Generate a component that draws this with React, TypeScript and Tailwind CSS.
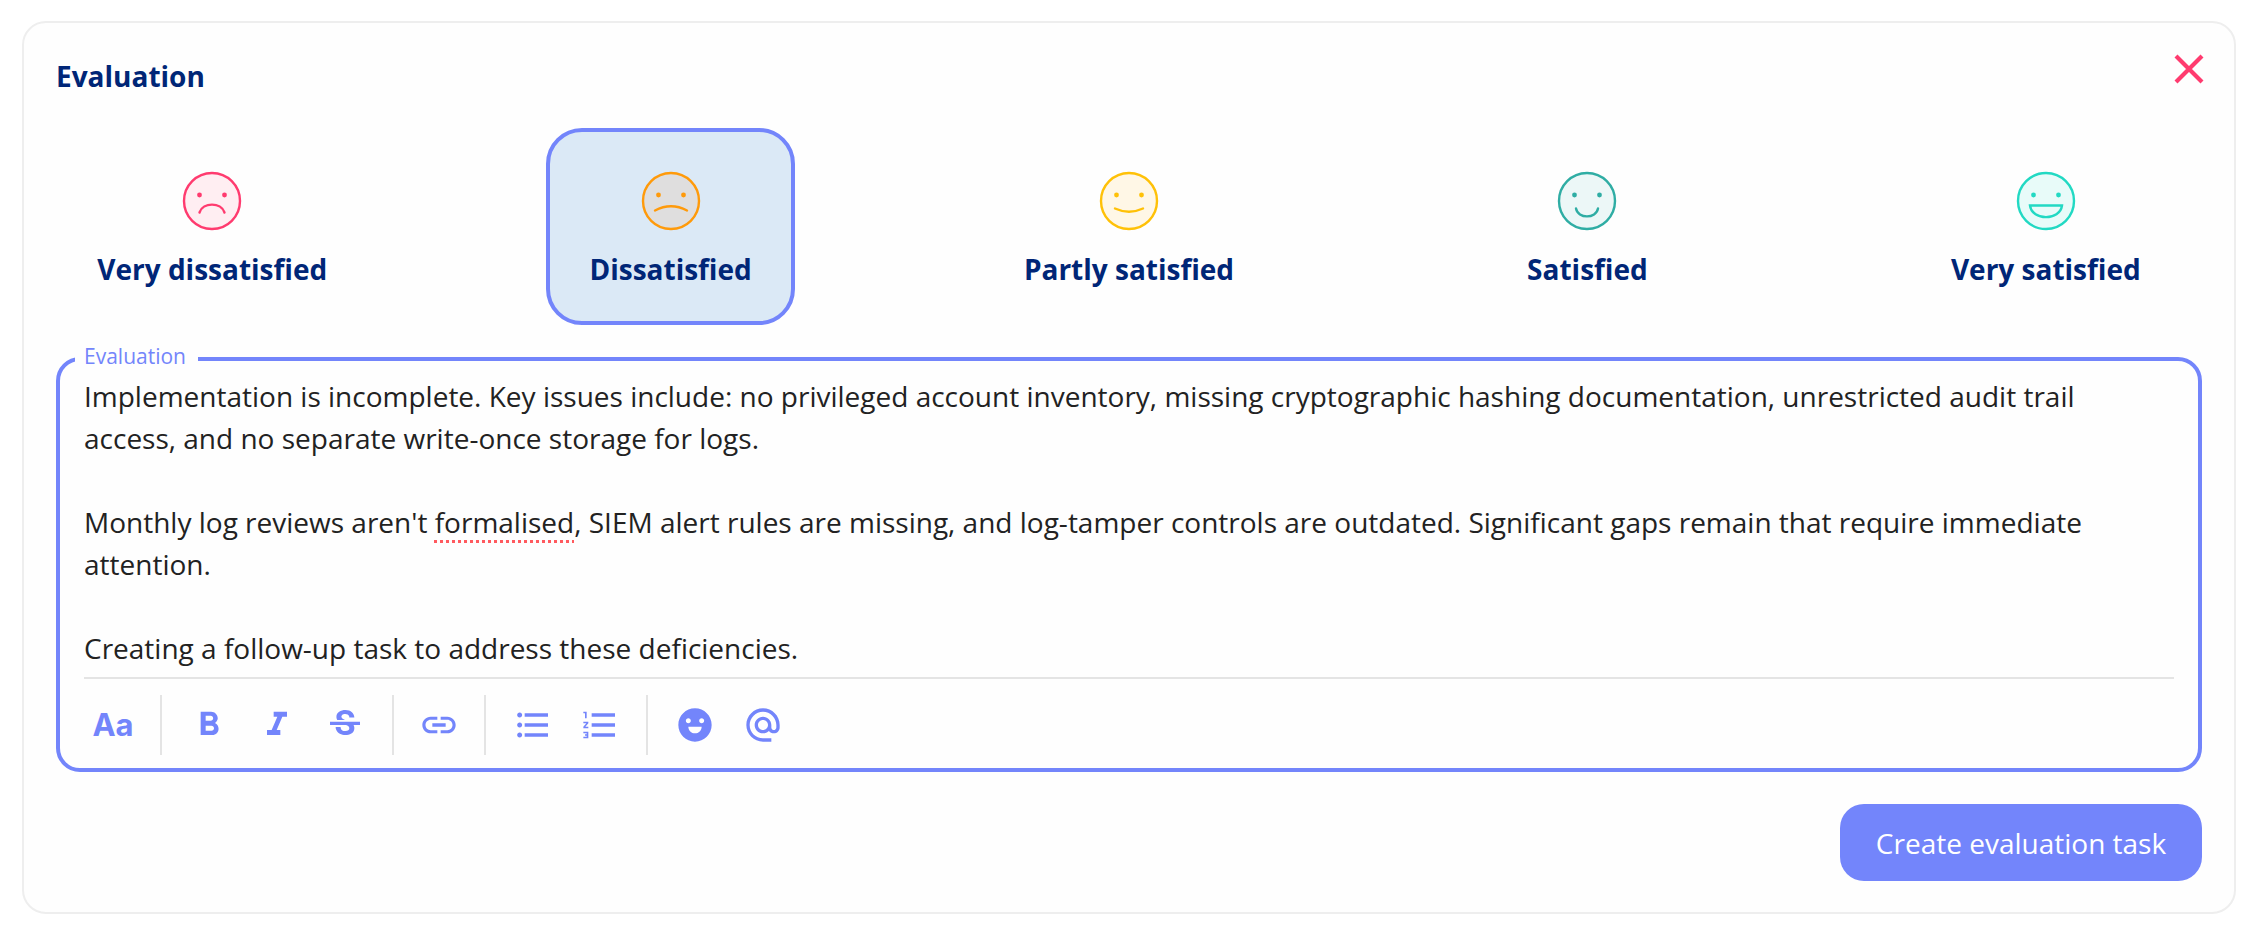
import { RiEmotionFill } from 'react-icons/ri';
import {
  MdAlternateEmail,
  MdFormatBold,
  MdFormatItalic,
  MdFormatListBulleted,
  MdFormatListNumbered,
  MdLink,
  MdStrikethroughS,
} from 'react-icons/md';

const FACES = [
  {
    label: 'Very dissatisfied',
    stroke: '#ff3b6f',
    fill: '#ffeef2',
    mouth: 'M17.5 41.5 C21 31 39 31 42.5 41.5',
  },
  {
    label: 'Dissatisfied',
    stroke: '#ff9a0a',
    fill: '#dfdede',
    mouth: 'M14 39.5 Q30 31 46 39.5',
    selected: true,
  },
  {
    label: 'Partly satisfied',
    stroke: '#ffc107',
    fill: '#fff7e6',
    mouth: 'M16 37.5 Q30 44 44 37.5',
  },
  {
    label: 'Satisfied',
    stroke: '#2fada4',
    fill: '#ecf7f7',
    mouth: 'M19 37.5 C21 48 39 48 41 37.5',
  },
  {
    label: 'Very satisfied',
    stroke: '#22d9c3',
    fill: '#e8fbf9',
    mouth: 'M14 34.5 H46 C44 50 16 50 14 34.5 Z',
  },
];

function Face({ stroke, fill, mouth }: { stroke: string; fill: string; mouth: string }) {
  return (
    <svg width="60" height="60" viewBox="0 0 60 60" fill="none">
      <circle cx="30" cy="30" r="28" fill={fill} stroke={stroke} strokeWidth="2.4" />
      <circle cx="17.5" cy="24" r="2.4" fill={stroke} />
      <circle cx="42.5" cy="24" r="2.4" fill={stroke} />
      <path d={mouth} stroke={stroke} strokeWidth="2.4" strokeLinecap="round" />
    </svg>
  );
}

function ToolButton({ children }: { children: React.ReactNode }) {
  return <button className="w-[68px] h-[60px] flex items-center justify-center text-[#7385fb]">{children}</button>;
}

function Divider() {
  return <div className="w-[2px] h-[60px] mx-[13px] bg-[#e4e4e4]" />;
}

export default function App() {
  return (
    <div className="w-full h-[934px] bg-white pl-[22px] pr-[24px] pt-[21px] pb-[20px] font-['Open_Sans',sans-serif]">
      <div className="relative h-full border-2 border-[#eeeeee] rounded-[24px] bg-[#fefefe] pt-[35px] px-[32px]">
        <h2 className="text-[28px] leading-[36px] font-bold text-[#002677]">Evaluation</h2>
        <button className="absolute top-[29px] right-[28px] text-[#ff3b6f]">
          <svg width="34" height="34" viewBox="0 0 34 34" fill="none" stroke="currentColor" strokeWidth="4.2">
            <path d="M4 4 L30 30 M30 4 L4 30" />
          </svg>
        </button>

        {/* rating options */}
        <div className="mt-[34px] grid grid-cols-5 gap-[146px]">
          {FACES.map((face) => (
            <div key={face.label} className="flex justify-center">
              <div
                className={`h-[197px] flex flex-col items-center pt-[39px] px-[39px] rounded-[36px] border-[4px] whitespace-nowrap ${
                  face.selected ? 'border-[#7385fb] bg-[#dbe9f6]' : 'border-transparent'
                }`}
              >
                <Face stroke={face.stroke} fill={face.fill} mouth={face.mouth} />
                <div className="mt-[19px] text-[28px] leading-[38px] font-bold text-[#002677]">{face.label}</div>
              </div>
            </div>
          ))}
        </div>

        {/* editor */}
        <div className="relative mt-[32px] h-[415px] border-[4px] border-[#7385fb] rounded-[24px] px-[24px] pt-[14px]">
          <span className="absolute top-[-17px] left-[15px] bg-[#fefefe] pl-[9px] pr-[12px] text-[21px] leading-[24px] text-[#7385fb]">
            Evaluation
          </span>
          <div className="h-[304px] border-b-2 border-[#e4e4e4] pr-[10px] text-[28px] leading-[42px] text-[#222222]">
            <p>
              Implementation is incomplete. Key issues include: no privileged account inventory, missing cryptographic
              hashing documentation, unrestricted audit trail access, and no separate write-once storage for logs.
            </p>
            <p className="h-[42px]" />
            <p>
              Monthly log reviews aren't{' '}
              <span className="underline decoration-dotted decoration-[#ff5a5f] decoration-[3px] underline-offset-[7px]">
                formalised
              </span>
              , SIEM alert rules are missing, and log-tamper controls are outdated. Significant gaps remain that require
              immediate attention.
            </p>
            <p className="h-[42px]" />
            <p>Creating a follow-up task to address these deficiencies.</p>
          </div>
          <div className="mt-[16px] flex items-center">
            <div className="w-[68px] h-[60px] -ml-[5px] flex items-center justify-center text-[31px] font-['Inter',sans-serif] font-bold text-[#7385fb]">
              Aa
            </div>
            <Divider />
            <ToolButton>
              <MdFormatBold size={40} />
            </ToolButton>
            <ToolButton>
              <MdFormatItalic size={40} />
            </ToolButton>
            <ToolButton>
              <MdStrikethroughS size={40} />
            </ToolButton>
            <Divider />
            <button className="w-[64px] h-[60px] flex items-center justify-center text-[#7385fb]">
              <MdLink size={40} />
            </button>
            <Divider />
            <button className="w-[67px] h-[60px] flex items-center justify-center text-[#7385fb]">
              <MdFormatListBulleted size={40} />
            </button>
            <button className="w-[67px] h-[60px] flex items-center justify-center text-[#7385fb]">
              <MdFormatListNumbered size={40} />
            </button>
            <Divider />
            <ToolButton>
              <RiEmotionFill size={40} />
            </ToolButton>
            <ToolButton>
              <MdAlternateEmail size={40} />
            </ToolButton>
          </div>
        </div>

        <div className="mt-[32px] flex justify-end">
          <button className="w-[362px] h-[77px] rounded-[24px] bg-[#7385fb] text-[28px] text-white">
            Create evaluation task
          </button>
        </div>
      </div>
    </div>
  );
}
